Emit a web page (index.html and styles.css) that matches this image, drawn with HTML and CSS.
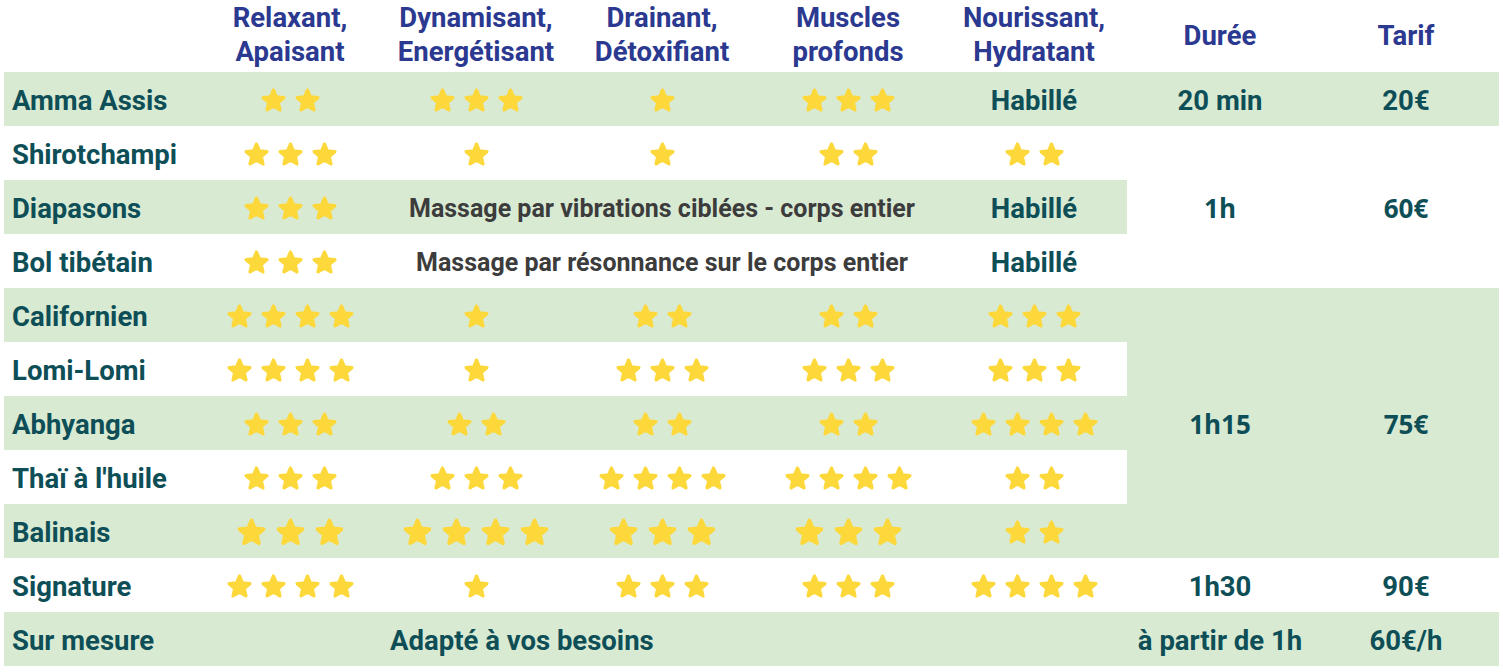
FILE: index.html
```html
<!DOCTYPE html>
<html lang="fr">
<head>
<meta charset="utf-8">
<title>Tarifs massages</title>
<link rel="stylesheet" href="styles.css">
</head>
<body>
<svg class="sprite" width="0" height="0" aria-hidden="true">
  <symbol id="s" viewBox="-1 -1 26 26">
    <path d="M12 17.27 18.18 21l-1.64-7.03L22 9.24l-7.19-.61L12 2 9.19 8.63 2 9.24l5.46 4.73L5.82 21z" fill="#fdd83b" stroke="#fdd83b" stroke-width="3.2" stroke-linejoin="round"/>
  </symbol>
</svg>
<div class="grid">
  <!-- header -->
  <div class="h"></div>
  <div class="h">Relaxant,<br>Apaisant</div>
  <div class="h">Dynamisant,<br>Energétisant</div>
  <div class="h">Drainant,<br>Détoxifiant</div>
  <div class="h">Muscles<br>profonds</div>
  <div class="h">Nourissant,<br>Hydratant</div>
  <div class="h mid">Durée</div>
  <div class="h mid">Tarif</div>

  <!-- Amma Assis -->
  <div class="c l g">Amma Assis</div>
  <div class="c g"><svg class="st"><use href="#s"/></svg><svg class="st"><use href="#s"/></svg></div>
  <div class="c g"><svg class="st"><use href="#s"/></svg><svg class="st"><use href="#s"/></svg><svg class="st"><use href="#s"/></svg></div>
  <div class="c g"><svg class="st"><use href="#s"/></svg></div>
  <div class="c g"><svg class="st"><use href="#s"/></svg><svg class="st"><use href="#s"/></svg><svg class="st"><use href="#s"/></svg></div>
  <div class="c g">Habillé</div>
  <div class="c g">20 min</div>
  <div class="c g">20€</div>

  <!-- Shirotchampi -->
  <div class="c l">Shirotchampi</div>
  <div class="c"><svg class="st"><use href="#s"/></svg><svg class="st"><use href="#s"/></svg><svg class="st"><use href="#s"/></svg></div>
  <div class="c"><svg class="st"><use href="#s"/></svg></div>
  <div class="c"><svg class="st"><use href="#s"/></svg></div>
  <div class="c"><svg class="st"><use href="#s"/></svg><svg class="st"><use href="#s"/></svg></div>
  <div class="c"><svg class="st"><use href="#s"/></svg><svg class="st"><use href="#s"/></svg></div>
  <div class="c os r3">1h</div>
  <div class="c os r3">60€</div>

  <!-- Diapasons -->
  <div class="c l g">Diapasons</div>
  <div class="c g"><svg class="st"><use href="#s"/></svg><svg class="st"><use href="#s"/></svg><svg class="st"><use href="#s"/></svg></div>
  <div class="c g m span3">Massage par vibrations ciblées - corps entier</div>
  <div class="c g">Habillé</div>

  <!-- Bol tibétain -->
  <div class="c l">Bol tibétain</div>
  <div class="c"><svg class="st"><use href="#s"/></svg><svg class="st"><use href="#s"/></svg><svg class="st"><use href="#s"/></svg></div>
  <div class="c m span3">Massage par résonnance sur le corps entier</div>
  <div class="c">Habillé</div>

  <!-- Californien -->
  <div class="c l g">Californien</div>
  <div class="c g"><svg class="st"><use href="#s"/></svg><svg class="st"><use href="#s"/></svg><svg class="st"><use href="#s"/></svg><svg class="st"><use href="#s"/></svg></div>
  <div class="c g"><svg class="st"><use href="#s"/></svg></div>
  <div class="c g"><svg class="st"><use href="#s"/></svg><svg class="st"><use href="#s"/></svg></div>
  <div class="c g"><svg class="st"><use href="#s"/></svg><svg class="st"><use href="#s"/></svg></div>
  <div class="c g"><svg class="st"><use href="#s"/></svg><svg class="st"><use href="#s"/></svg><svg class="st"><use href="#s"/></svg></div>
  <div class="c g os r5">1h15</div>
  <div class="c g os r5">75€</div>

  <!-- Lomi-Lomi -->
  <div class="c l">Lomi-Lomi</div>
  <div class="c"><svg class="st"><use href="#s"/></svg><svg class="st"><use href="#s"/></svg><svg class="st"><use href="#s"/></svg><svg class="st"><use href="#s"/></svg></div>
  <div class="c"><svg class="st"><use href="#s"/></svg></div>
  <div class="c"><svg class="st"><use href="#s"/></svg><svg class="st"><use href="#s"/></svg><svg class="st"><use href="#s"/></svg></div>
  <div class="c"><svg class="st"><use href="#s"/></svg><svg class="st"><use href="#s"/></svg><svg class="st"><use href="#s"/></svg></div>
  <div class="c"><svg class="st"><use href="#s"/></svg><svg class="st"><use href="#s"/></svg><svg class="st"><use href="#s"/></svg></div>

  <!-- Abhyanga -->
  <div class="c l g">Abhyanga</div>
  <div class="c g"><svg class="st"><use href="#s"/></svg><svg class="st"><use href="#s"/></svg><svg class="st"><use href="#s"/></svg></div>
  <div class="c g"><svg class="st"><use href="#s"/></svg><svg class="st"><use href="#s"/></svg></div>
  <div class="c g"><svg class="st"><use href="#s"/></svg><svg class="st"><use href="#s"/></svg></div>
  <div class="c g"><svg class="st"><use href="#s"/></svg><svg class="st"><use href="#s"/></svg></div>
  <div class="c g"><svg class="st"><use href="#s"/></svg><svg class="st"><use href="#s"/></svg><svg class="st"><use href="#s"/></svg><svg class="st"><use href="#s"/></svg></div>

  <!-- Thaï à l'huile -->
  <div class="c l">Thaï à l'huile</div>
  <div class="c"><svg class="st"><use href="#s"/></svg><svg class="st"><use href="#s"/></svg><svg class="st"><use href="#s"/></svg></div>
  <div class="c"><svg class="st"><use href="#s"/></svg><svg class="st"><use href="#s"/></svg><svg class="st"><use href="#s"/></svg></div>
  <div class="c"><svg class="st"><use href="#s"/></svg><svg class="st"><use href="#s"/></svg><svg class="st"><use href="#s"/></svg><svg class="st"><use href="#s"/></svg></div>
  <div class="c"><svg class="st"><use href="#s"/></svg><svg class="st"><use href="#s"/></svg><svg class="st"><use href="#s"/></svg><svg class="st"><use href="#s"/></svg></div>
  <div class="c"><svg class="st"><use href="#s"/></svg><svg class="st"><use href="#s"/></svg></div>

  <!-- Balinais -->
  <div class="c l g">Balinais</div>
  <div class="c g big"><svg class="st"><use href="#s"/></svg><svg class="st"><use href="#s"/></svg><svg class="st"><use href="#s"/></svg></div>
  <div class="c g big"><svg class="st"><use href="#s"/></svg><svg class="st"><use href="#s"/></svg><svg class="st"><use href="#s"/></svg><svg class="st"><use href="#s"/></svg></div>
  <div class="c g big"><svg class="st"><use href="#s"/></svg><svg class="st"><use href="#s"/></svg><svg class="st"><use href="#s"/></svg></div>
  <div class="c g big"><svg class="st"><use href="#s"/></svg><svg class="st"><use href="#s"/></svg><svg class="st"><use href="#s"/></svg></div>
  <div class="c g"><svg class="st"><use href="#s"/></svg><svg class="st"><use href="#s"/></svg></div>

  <!-- Signature -->
  <div class="c l">Signature</div>
  <div class="c"><svg class="st"><use href="#s"/></svg><svg class="st"><use href="#s"/></svg><svg class="st"><use href="#s"/></svg><svg class="st"><use href="#s"/></svg></div>
  <div class="c"><svg class="st"><use href="#s"/></svg></div>
  <div class="c"><svg class="st"><use href="#s"/></svg><svg class="st"><use href="#s"/></svg><svg class="st"><use href="#s"/></svg></div>
  <div class="c"><svg class="st"><use href="#s"/></svg><svg class="st"><use href="#s"/></svg><svg class="st"><use href="#s"/></svg></div>
  <div class="c"><svg class="st"><use href="#s"/></svg><svg class="st"><use href="#s"/></svg><svg class="st"><use href="#s"/></svg><svg class="st"><use href="#s"/></svg></div>
  <div class="c">1h30</div>
  <div class="c">90€</div>

  <!-- Sur mesure -->
  <div class="c l g">Sur mesure</div>
  <div class="c g span5">Adapté à vos besoins</div>
  <div class="c g">à partir de 1h</div>
  <div class="c g">60€/h</div>
</div>
</body>
</html>
```

FILE: styles.css
```css
html, body {
  margin: 0;
  padding: 0;
  background: #ffffff;
}

body {
  font-family: Roboto, "Noto Sans", sans-serif;
  font-weight: 700;
  color: #0e4f57;
}

.sprite {
  position: absolute;
  width: 0;
  height: 0;
  overflow: hidden;
}

.grid {
  display: grid;
  grid-template-columns: 193px repeat(7, 186px);
  grid-template-rows: 72px repeat(11, 54px);
  margin-left: 4px;
  width: 1495px;
}

.h {
  color: #2b3990;
  font-size: 27.5px;
  line-height: 34px;
  text-align: center;
  display: flex;
  align-items: flex-start;
  justify-content: center;
  padding-top: 1px;
}

.h.mid {
  align-items: center;
  padding-top: 0;
}

.c {
  display: flex;
  align-items: center;
  justify-content: center;
  gap: 7px;
  font-size: 27.5px;
  text-align: center;
  white-space: nowrap;
  padding-top: 2px;
}

.g {
  background: #d9ead3;
}

.l {
  justify-content: flex-start;
  padding-left: 8px;
}

.m {
  color: #3c3c3c;
  font-size: 25px;
}

.os {
  font-family: "Open Sans", Roboto, sans-serif;
  font-size: 26px;
}

.span3 {
  grid-column: span 3;
}

.span5 {
  grid-column: span 5;
  justify-content: flex-start;
  padding-left: 193px;
}

.r3 {
  grid-row: span 3;
}

.r5 {
  grid-row: span 5;
}

.st {
  width: 27px;
  height: 27px;
  flex: none;
}

.big {
  gap: 8px;
}

.big .st {
  width: 31px;
  height: 31px;
}
```
